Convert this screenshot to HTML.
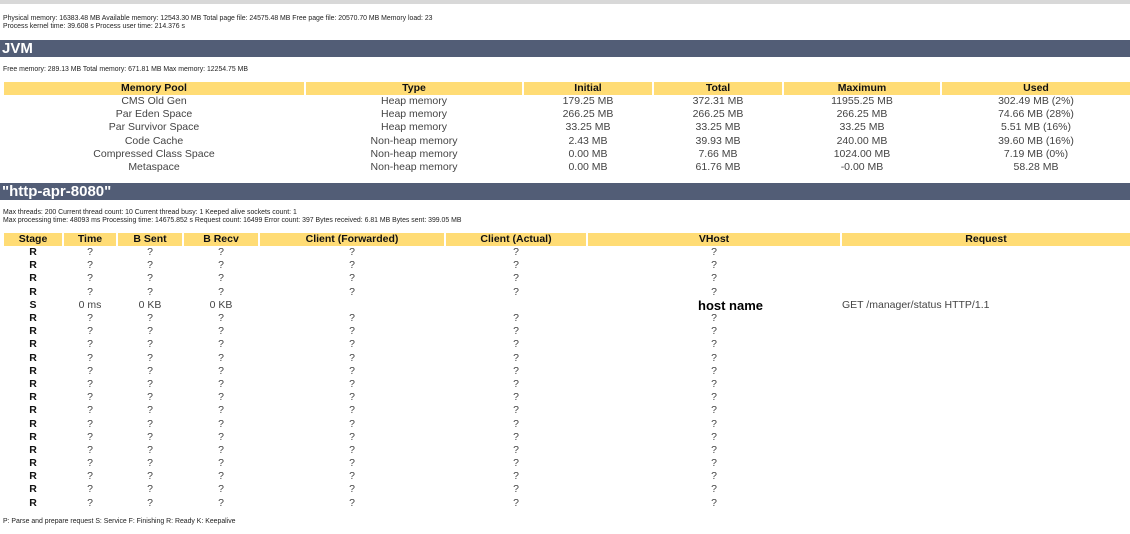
<!DOCTYPE html>
<html><head><style>
body{margin:0;width:1130px;height:534px;background:#fff;font-family:"Liberation Sans",Arial,sans-serif;color:#333;position:relative;overflow:hidden}
.topbar{position:absolute;left:0;top:0;width:1130px;height:4px;background:#d8d8d8}
.small{position:absolute;left:3px;font-family:"Liberation Sans",sans-serif;font-size:6.9px;line-height:8px;color:#222;white-space:nowrap}
.bar{position:absolute;left:0;width:1130px;height:17px;background:#525d76;color:#fff;font-weight:bold;font-size:15px;line-height:17px;padding-left:2px;font-family:"Liberation Sans",sans-serif}
table{position:absolute;left:2px;border-collapse:separate;border-spacing:2px 0;table-layout:fixed;font-size:10.5px}
th{background:#ffdc75;height:13px;line-height:13px;font-weight:bold;padding:0;color:#111}
td{height:13.2px;line-height:13px;padding:0;text-align:center;color:#444;white-space:nowrap}
td.b{font-weight:bold;color:#111}
</style></head><body>
<div class="topbar"></div>
<div class="small" style="top:15px">Physical memory: 16383.48 MB Available memory: 12543.30 MB Total page file: 24575.48 MB Free page file: 20570.70 MB Memory load: 23</div>
<div class="small" style="top:23px">Process kernel time: 39.608 s Process user time: 214.376 s</div>
<div class="bar" style="top:40px">JVM</div>
<div class="small" style="top:66px">Free memory: 289.13 MB Total memory: 671.81 MB Max memory: 12254.75 MB</div>
<table style="top:82px;width:1130px">
<colgroup><col style="width:300px"><col style="width:216px"><col style="width:128px"><col style="width:128px"><col style="width:156px"><col style="width:188px"></colgroup>
<tr><th>Memory Pool</th><th>Type</th><th>Initial</th><th>Total</th><th>Maximum</th><th>Used</th></tr>
<tr><td>CMS Old Gen</td><td>Heap memory</td><td>179.25 MB</td><td>372.31 MB</td><td>11955.25 MB</td><td>302.49 MB (2%)</td></tr>
<tr><td>Par Eden Space</td><td>Heap memory</td><td>266.25 MB</td><td>266.25 MB</td><td>266.25 MB</td><td>74.66 MB (28%)</td></tr>
<tr><td>Par Survivor Space</td><td>Heap memory</td><td>33.25 MB</td><td>33.25 MB</td><td>33.25 MB</td><td>5.51 MB (16%)</td></tr>
<tr><td>Code Cache</td><td>Non-heap memory</td><td>2.43 MB</td><td>39.93 MB</td><td>240.00 MB</td><td>39.60 MB (16%)</td></tr>
<tr><td>Compressed Class Space</td><td>Non-heap memory</td><td>0.00 MB</td><td>7.66 MB</td><td>1024.00 MB</td><td>7.19 MB (0%)</td></tr>
<tr><td>Metaspace</td><td>Non-heap memory</td><td>0.00 MB</td><td>61.76 MB</td><td>-0.00 MB</td><td>58.28 MB</td></tr>
</table>
<div class="bar" style="top:183px">"http-apr-8080"</div>
<div class="small" style="top:209px">Max threads: 200 Current thread count: 10 Current thread busy: 1 Keeped alive sockets count: 1</div>
<div class="small" style="top:217px">Max processing time: 48093 ms Processing time: 14675.852 s Request count: 16499 Error count: 397 Bytes received: 6.81 MB Bytes sent: 399.05 MB</div>
<table style="top:233px;width:1130px">
<colgroup><col style="width:58px"><col style="width:52px"><col style="width:64px"><col style="width:74px"><col style="width:184px"><col style="width:140px"><col style="width:252px"><col style="width:288px"></colgroup>
<tr><th>Stage</th><th>Time</th><th>B Sent</th><th>B Recv</th><th>Client (Forwarded)</th><th>Client (Actual)</th><th>VHost</th><th>Request</th></tr>
<tr><td class="b">R</td><td>?</td><td>?</td><td>?</td><td>?</td><td>?</td><td>?</td><td></td></tr>
<tr><td class="b">R</td><td>?</td><td>?</td><td>?</td><td>?</td><td>?</td><td>?</td><td></td></tr>
<tr><td class="b">R</td><td>?</td><td>?</td><td>?</td><td>?</td><td>?</td><td>?</td><td></td></tr>
<tr><td class="b">R</td><td>?</td><td>?</td><td>?</td><td>?</td><td>?</td><td>?</td><td></td></tr>
<tr><td class="b">S</td><td>0 ms</td><td>0 KB</td><td>0 KB</td><td></td><td></td><td style="font-weight:bold;color:#000;font-size:13px;text-align:left;padding-left:110px">host name</td><td style="text-align:left;padding-left:0">GET /manager/status HTTP/1.1</td></tr>
<tr><td class="b">R</td><td>?</td><td>?</td><td>?</td><td>?</td><td>?</td><td>?</td><td></td></tr>
<tr><td class="b">R</td><td>?</td><td>?</td><td>?</td><td>?</td><td>?</td><td>?</td><td></td></tr>
<tr><td class="b">R</td><td>?</td><td>?</td><td>?</td><td>?</td><td>?</td><td>?</td><td></td></tr>
<tr><td class="b">R</td><td>?</td><td>?</td><td>?</td><td>?</td><td>?</td><td>?</td><td></td></tr>
<tr><td class="b">R</td><td>?</td><td>?</td><td>?</td><td>?</td><td>?</td><td>?</td><td></td></tr>
<tr><td class="b">R</td><td>?</td><td>?</td><td>?</td><td>?</td><td>?</td><td>?</td><td></td></tr>
<tr><td class="b">R</td><td>?</td><td>?</td><td>?</td><td>?</td><td>?</td><td>?</td><td></td></tr>
<tr><td class="b">R</td><td>?</td><td>?</td><td>?</td><td>?</td><td>?</td><td>?</td><td></td></tr>
<tr><td class="b">R</td><td>?</td><td>?</td><td>?</td><td>?</td><td>?</td><td>?</td><td></td></tr>
<tr><td class="b">R</td><td>?</td><td>?</td><td>?</td><td>?</td><td>?</td><td>?</td><td></td></tr>
<tr><td class="b">R</td><td>?</td><td>?</td><td>?</td><td>?</td><td>?</td><td>?</td><td></td></tr>
<tr><td class="b">R</td><td>?</td><td>?</td><td>?</td><td>?</td><td>?</td><td>?</td><td></td></tr>
<tr><td class="b">R</td><td>?</td><td>?</td><td>?</td><td>?</td><td>?</td><td>?</td><td></td></tr>
<tr><td class="b">R</td><td>?</td><td>?</td><td>?</td><td>?</td><td>?</td><td>?</td><td></td></tr>
<tr><td class="b">R</td><td>?</td><td>?</td><td>?</td><td>?</td><td>?</td><td>?</td><td></td></tr>
</table>
<div class="small" style="top:518px">P: Parse and prepare request S: Service F: Finishing R: Ready K: Keepalive</div>
</body></html>
